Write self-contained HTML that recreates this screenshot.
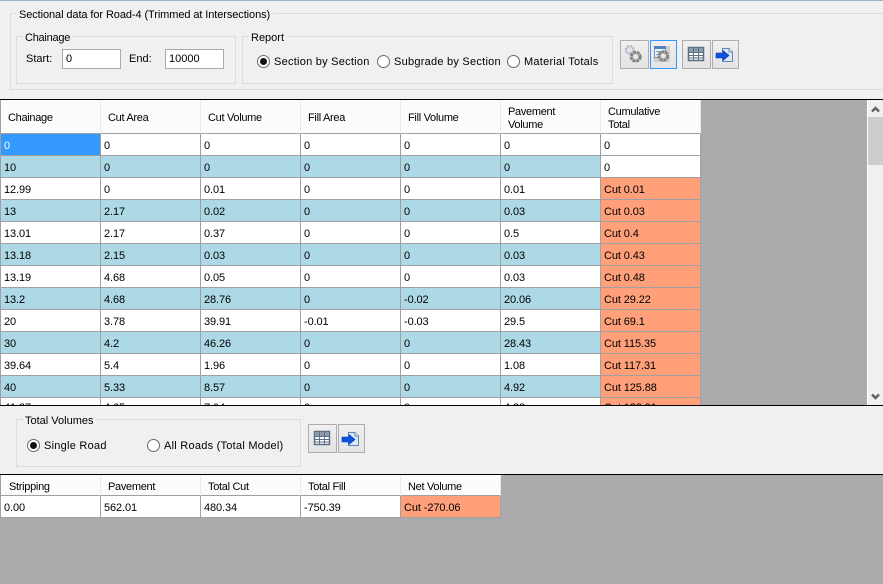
<!DOCTYPE html>
<html><head><meta charset="utf-8">
<style>
html,body{margin:0;padding:0}
body{width:883px;height:584px;overflow:hidden;background:#f0f0f0;position:relative;font-family:"Liberation Sans",sans-serif;font-size:11px;color:#000}
.a{position:absolute;white-space:nowrap}
.gb{position:absolute;border:1px solid #dcdcdc;box-sizing:border-box}
.lg{position:absolute;background:#f0f0f0;padding:0 3px 0 2px;line-height:13px;white-space:nowrap}
.inp{position:absolute;box-sizing:border-box;background:#fff;border:1px solid #a9a9a9;height:20px;width:59px;line-height:18px;padding-left:3px}
.rad{position:absolute;box-sizing:border-box;width:13px;height:13px;border-radius:50%;border:1px solid #6a6a6a;background:#fff}
.rad.on::after{content:"";position:absolute;left:2px;top:2px;width:7px;height:7px;border-radius:50%;background:#111}
.lb{position:absolute;line-height:13px;white-space:nowrap;letter-spacing:.25px}
.btn{position:absolute;box-sizing:border-box;width:29px;height:29px;border:1px solid #adadad;background:linear-gradient(#f0f0f0,#e3e3e3)}
.btn svg{position:absolute;left:0;top:0}
table{border-collapse:separate;border-spacing:0;table-layout:fixed;position:absolute}
td{box-sizing:border-box;width:100px;height:22px;padding:4px 0 0 3px;border-right:1px solid #a0a0a0;border-bottom:1px solid #a0a0a0;background:#fff;white-space:nowrap;overflow:hidden;line-height:17px;letter-spacing:-.1px}
tr.b td{background:#add8e6}
tr.l td{padding-top:0;line-height:21px}
td.s{background:#ffa07a!important}
td.sel{background:#3399ff!important;color:#fff}
.h{position:absolute;box-sizing:border-box;background:#fcfcfc;border-right:1px solid #e2ebf8;border-bottom:1px solid #a0a0a0;width:100px;padding-left:7px;padding-top:4px;line-height:13px;display:flex;align-items:center;letter-spacing:-.3px}
</style></head><body>
<div class="a" style="left:0;top:0;width:883px;height:1px;background:#9db4d0"></div>

<div class="gb" style="left:10px;top:13px;width:880px;height:77px"></div>
<div class="lg" style="left:17px;top:9px;letter-spacing:-.09px">Sectional data for Road-4 (Trimmed at Intersections)</div>

<div class="gb" style="left:16px;top:36px;width:220px;height:48px"></div>
<div class="lg" style="left:23px;top:32px;letter-spacing:-.25px">Chainage</div>
<div class="a" style="left:26px;top:53px;line-height:13px">Start:</div>
<div class="inp" style="left:62px;top:49px">0</div>
<div class="a" style="left:129px;top:53px;line-height:13px">End:</div>
<div class="inp" style="left:165px;top:49px">10000</div>

<div class="gb" style="left:242px;top:36px;width:371px;height:48px"></div>
<div class="lg" style="left:249px;top:32px">Report</div>
<div class="rad on" style="left:257px;top:55px"></div><div class="lb" style="left:274px;top:56px">Section by Section</div>
<div class="rad" style="left:377px;top:55px"></div><div class="lb" style="left:394px;top:56px">Subgrade by Section</div>
<div class="rad" style="left:507px;top:55px"></div><div class="lb" style="left:524px;top:56px">Material Totals</div>

<div class="btn" style="left:620px;top:40px"><svg width="27" height="27" viewBox="0 0 27 27"><circle cx="8.700" cy="9" r="3.800" fill="#e4e4ee" stroke="#b4b4c0" stroke-width="2.200" stroke-dasharray="2.200 .8"/><circle cx="14.700" cy="15.700" r="4.500" fill="#c8c8c8" stroke="#858585" stroke-width="3" stroke-dasharray="3 .7"/><circle cx="14.700" cy="15.700" r="2.300" fill="#e8e8e8"/></svg></div>
<div class="btn" style="left:650px;top:40px;width:27px;border-color:#3399ff"><svg width="25" height="27" viewBox="0 0 25 27"><rect x="3" y="5" width="16" height="16" fill="#d4cfc6"/><rect x="3.500" y="5.500" width="11" height="11" fill="#eef3fa" stroke="#6d92c0"/><rect x="3" y="5" width="12" height="3" fill="#4f83c8"/><path d="M5 10.500h8M5 13.500h5" stroke="#7f9cc0"/><circle cx="12.300" cy="15" r="4.300" fill="#c8c8c8" stroke="#858585" stroke-width="3" stroke-dasharray="3 .7"/><circle cx="12.300" cy="15" r="2.200" fill="#e8e8e8"/></svg></div>
<div class="btn" style="left:682px;top:40px"><svg width="27" height="27" viewBox="0 0 27 27"><rect x="5.500" y="6.500" width="15" height="13" fill="#fff" stroke="#5d6f83" stroke-width="1.500"/><rect x="6" y="7" width="14" height="4" fill="#8b9aab"/><path d="M10.500 7v12M15.500 7v12M6 11.500h14M6 14.500h14M6 17h14" stroke="#5d6f83" fill="none"/></svg></div>
<div class="btn" style="left:712px;top:40px;width:27px"><svg width="25" height="27" viewBox="0 0 25 27"><path d="M9.500 7.500H16L19.500 11V20.500H9.500Z" fill="#dce8f6" stroke="#5f86b8"/><path d="M16 7.500V11H19.500" fill="#fff" stroke="#5f86b8"/><path d="M3 12H10V9.500L16 14.500L10 19.500V17H3Z" fill="#0a52e0" stroke="#0a35b0" stroke-width=".6"/></svg></div>

<div class="a" style="left:0;top:99px;width:883px;height:1px;background:#000"></div>
<div class="a" style="left:0;top:100px;width:867px;height:305px;background:#ababab"></div>
<div class="a" style="left:867px;top:100px;width:1px;height:305px;background:#fff"></div>
<div class="a" style="left:868px;top:100px;width:15px;height:305px;background:#f0f0f0"></div>
<div class="a" style="left:868px;top:117px;width:15px;height:48px;background:#cdcdcd"></div>
<svg class="a" style="left:868px;top:105px" width="15" height="9" viewBox="0 0 15 9"><path d="M4 6.500L7.500 3L11 6.500" fill="none" stroke="#606060" stroke-width="2.400"/></svg>
<svg class="a" style="left:868px;top:392px" width="15" height="9" viewBox="0 0 15 9"><path d="M4 2.500L7.500 6L11 2.500" fill="none" stroke="#606060" stroke-width="2.400"/></svg>

<div class="a" style="left:0;top:100px;width:867px;height:305px;overflow:hidden">
<div class="a" style="left:0;top:0;width:1px;height:305px;background:#a0a0a0"></div>
<div class="h" style="left:1px;top:0;height:34px;width:100px">Chainage</div>
<div class="h" style="left:101px;top:0;height:34px">Cut Area</div>
<div class="h" style="left:201px;top:0;height:34px">Cut Volume</div>
<div class="h" style="left:301px;top:0;height:34px">Fill Area</div>
<div class="h" style="left:401px;top:0;height:34px">Fill Volume</div>
<div class="h" style="left:501px;top:0;height:34px">Pavement<br>Volume</div>
<div class="h" style="left:601px;top:0;height:34px">Cumulative<br>Total</div>
<table style="left:1px;top:34px;width:700px">
<tr><td class="sel">0</td><td>0</td><td>0</td><td>0</td><td>0</td><td>0</td><td>0</td></tr>
<tr class="b"><td>10</td><td>0</td><td>0</td><td>0</td><td>0</td><td>0</td><td style="background:#fff">0</td></tr>
<tr><td>12.99</td><td>0</td><td>0.01</td><td>0</td><td>0</td><td>0.01</td><td class="s">Cut 0.01</td></tr>
<tr class="b"><td>13</td><td>2.17</td><td>0.02</td><td>0</td><td>0</td><td>0.03</td><td class="s">Cut 0.03</td></tr>
<tr><td>13.01</td><td>2.17</td><td>0.37</td><td>0</td><td>0</td><td>0.5</td><td class="s">Cut 0.4</td></tr>
<tr class="b"><td>13.18</td><td>2.15</td><td>0.03</td><td>0</td><td>0</td><td>0.03</td><td class="s">Cut 0.43</td></tr>
<tr><td>13.19</td><td>4.68</td><td>0.05</td><td>0</td><td>0</td><td>0.03</td><td class="s">Cut 0.48</td></tr>
<tr class="b"><td>13.2</td><td>4.68</td><td>28.76</td><td>0</td><td>-0.02</td><td>20.06</td><td class="s">Cut 29.22</td></tr>
<tr><td>20</td><td>3.78</td><td>39.91</td><td>-0.01</td><td>-0.03</td><td>29.5</td><td class="s">Cut 69.1</td></tr>
<tr class="b"><td>30</td><td>4.2</td><td>46.26</td><td>0</td><td>0</td><td>28.43</td><td class="s">Cut 115.35</td></tr>
<tr><td>39.64</td><td>5.4</td><td>1.96</td><td>0</td><td>0</td><td>1.08</td><td class="s">Cut 117.31</td></tr>
<tr class="b"><td>40</td><td>5.33</td><td>8.57</td><td>0</td><td>0</td><td>4.92</td><td class="s">Cut 125.88</td></tr>
<tr class="l"><td>41.37</td><td>4.65</td><td>7.04</td><td>0</td><td>0</td><td>4.38</td><td class="s">Cut 132.91</td></tr>
</table>
</div>
<div class="a" style="left:0;top:405px;width:883px;height:1px;background:#000"></div>

<div class="gb" style="left:16px;top:419px;width:285px;height:48px"></div>
<div class="lg" style="left:23px;top:415px">Total Volumes</div>
<div class="rad on" style="left:27px;top:439px"></div><div class="lb" style="left:44px;top:440px">Single Road</div>
<div class="rad" style="left:147px;top:439px"></div><div class="lb" style="left:164px;top:440px">All Roads (Total Model)</div>
<div class="btn" style="left:308px;top:424px"><svg width="27" height="27" viewBox="0 0 27 27"><rect x="5.500" y="6.500" width="15" height="13" fill="#fff" stroke="#5d6f83" stroke-width="1.500"/><rect x="6" y="7" width="14" height="4" fill="#8b9aab"/><path d="M10.500 7v12M15.500 7v12M6 11.500h14M6 14.500h14M6 17h14" stroke="#5d6f83" fill="none"/></svg></div>
<div class="btn" style="left:338px;top:424px;width:27px"><svg width="25" height="27" viewBox="0 0 25 27"><path d="M9.500 7.500H16L19.500 11V20.500H9.500Z" fill="#dce8f6" stroke="#5f86b8"/><path d="M16 7.500V11H19.500" fill="#fff" stroke="#5f86b8"/><path d="M3 12H10V9.500L16 14.500L10 19.500V17H3Z" fill="#0a52e0" stroke="#0a35b0" stroke-width=".6"/></svg></div>

<div class="a" style="left:0;top:474px;width:883px;height:1px;background:#000"></div>
<div class="a" style="left:0;top:475px;width:883px;height:109px;background:#ababab"></div>
<div class="a" style="left:0;top:475px;width:1px;height:43px;background:#a0a0a0"></div>
<div class="h" style="left:1px;top:475px;height:21px;padding-left:8px">Stripping</div>
<div class="h" style="left:101px;top:475px;height:21px">Pavement</div>
<div class="h" style="left:201px;top:475px;height:21px">Total Cut</div>
<div class="h" style="left:301px;top:475px;height:21px">Total Fill</div>
<div class="h" style="left:401px;top:475px;height:21px">Net Volume</div>
<table style="left:1px;top:496px;width:500px">
<tr><td>0.00</td><td>562.01</td><td>480.34</td><td>-750.39</td><td class="s">Cut -270.06</td></tr>
</table>
</body></html>
